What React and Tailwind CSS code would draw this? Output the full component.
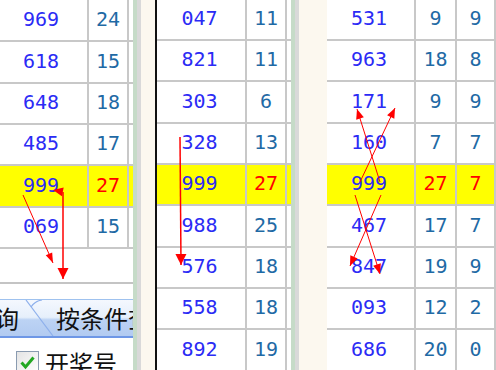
const left = [
  ['969', '24'], ['618', '15'], ['648', '18'], ['485', '17'], ['999', '27'], ['069', '15'],
];
const mid = [
  ['047', '11'], ['821', '11'], ['303', '6'], ['328', '13'], ['999', '27'],
  ['988', '25'], ['576', '18'], ['558', '18'], ['892', '19'],
];
const right = [
  ['531', '9', '9'], ['963', '18', '8'], ['171', '9', '9'], ['160', '7', '7'], ['999', '27', '7'],
  ['467', '17', '7'], ['847', '19', '9'], ['093', '12', '2'], ['686', '20', '0'],
];

const leftH = [42, 42, 41, 41, 42, 41];
const sideH = [41, 41, 42, 41, 41, 42, 41, 41, 42];

function Table({ rows, heights, widths, sliver }) {
  return (
    <div className="flex flex-col">
      {rows.map((r, i) => {
        const hi = i === 4;
        return (
          <div
            key={i}
            className={`flex shrink-0 border-b-2 border-[#c8c8c8] ${heights[i] === 42 ? 'h-[42px]' : 'h-[41px]'} ${hi ? 'bg-[#ffff00]' : 'bg-white'}`}
          >
            {r.map((v, j) => (
              <div
                key={j}
                className={`${widths[j]} shrink-0 flex items-center justify-center pb-[3px] border-r-2 border-[#c8c8c8] ${j === 0 ? 'pr-[3px] text-[#2b2bf5]' : hi ? 'text-[#ff0000]' : 'text-[#1f6aa5]'}`}
              >
                {v}
              </div>
            ))}
            {sliver && <div className="w-[4px] shrink-0" />}
          </div>
        );
      })}
    </div>
  );
}

function head(x1, y1, x2, y2, len = 10, w = 4) {
  const dx = x2 - x1;
  const dy = y2 - y1;
  const L = Math.hypot(dx, dy);
  const ux = dx / L;
  const uy = dy / L;
  const bx = x2 - ux * len;
  const by = y2 - uy * len;
  return `${x2},${y2} ${bx - uy * w},${by + ux * w} ${bx + uy * w},${by - ux * w}`;
}

const arrows = [
  { a: [23, 195, 53, 263], sw: 1, len: 10, w: 3.5 },
  { a: [63, 192, 63, 279], sw: 1.5, len: 11, w: 5.5 },
  { a: [180, 137, 181, 265], sw: 1.5, len: 11, w: 5.5 },
  { a: [380, 182, 357, 109], sw: 1, len: 10, w: 4 },
  { a: [360, 182, 395, 108], sw: 1, len: 10, w: 4 },
  { a: [355, 195, 380, 274], sw: 1, len: 10, w: 4 },
  { a: [381, 195, 350, 266], sw: 1, len: 10, w: 4 },
];

function Separator({ beige, black }) {
  return (
    <div className="flex shrink-0 h-full">
      <div className="w-[4px] bg-[#c6dbc8]" />
      <div className="w-[4px] bg-[#d9d9d9]" />
      <div className={`${beige} bg-[#fcf8ef]`} />
      {black && <div className="w-[2px] bg-[#111111]" />}
    </div>
  );
}

export default function App() {
  return (
    <div className="relative flex w-[496px] h-[370px] overflow-hidden bg-white font-['DejaVu_Sans_Mono',monospace] text-[20px]">
      {/* left panel */}
      <div className="w-[133px] shrink-0 h-full overflow-hidden flex flex-col">
        <div className="-ml-[2px]">
          <Table rows={left} heights={leftH} widths={['w-[91px]', 'w-[40px]']} sliver />
        </div>
        <div className="h-[33px] shrink-0" />
        <div className="h-[2px] shrink-0 bg-[#c4c4c4]" />
        <div className="h-[15px] shrink-0" />
        <div className="relative h-[39px] shrink-0 border-t border-b-2 border-t-[#9fc2ef] border-b-[#6e97e6] bg-[linear-gradient(to_bottom,#f4f8fe_0%,#e6effb_48%,#bcd3f4_55%,#b2cbf1_100%)] flex items-center whitespace-nowrap font-['Noto_Sans_CJK_SC',sans-serif] text-[24px] leading-[24px] text-[#111]">
          <span className="-ml-[29px]">查询</span>
          <span className="ml-[37px]">按条件查询</span>
          <svg className="absolute left-0 top-0" width="133" height="36">
            <path d="M26 0 L53 36" stroke="#8eb0ec" strokeWidth="1.2" fill="none" />
            <path d="M31 7 Q35 1 42 0" stroke="#8eb0ec" strokeWidth="1.2" fill="none" />
          </svg>
        </div>
        <div className="flex items-start pt-[13px] pl-[16px]">
          <div className="w-[23px] h-[23px] shrink-0 border border-[#8a9bb0] bg-[linear-gradient(135deg,#e4e4e4,#ffffff)] flex items-center justify-center">
            <svg width="19" height="19" viewBox="0 0 19 19">
              <path d="M3.5 9.5 L7.5 14 L15.5 4.5" stroke="#23a823" strokeWidth="3" fill="none" />
            </svg>
          </div>
          <span className="ml-[6px] font-['Noto_Sans_CJK_SC',sans-serif] text-[24px] leading-[24px] text-[#111]">开奖号</span>
        </div>
      </div>

      <Separator beige="w-[14px]" black />

      {/* middle panel */}
      <div className="w-[134px] shrink-0 h-full overflow-hidden">
        <Table rows={mid} heights={sideH} widths={['w-[90px]', 'w-[40px]']} sliver />
      </div>

      <Separator beige="w-[28px]" />

      {/* right panel */}
      <div className="w-[169px] shrink-0 h-full overflow-hidden">
        <Table rows={right} heights={sideH} widths={['w-[89px]', 'w-[41px]', 'w-[39px]']} />
      </div>

      {/* red arrows drawn over the grids */}
      <svg className="absolute inset-0 pointer-events-none" width="496" height="370">
        {arrows.map(({ a, sw, len, w }, i) => (
          <g key={i}>
            <line x1={a[0]} y1={a[1]} x2={a[2]} y2={a[3]} stroke="#ff0000" strokeWidth={sw} />
            <polygon points={head(a[0], a[1], a[2], a[3], len, w)} fill="#ff0000" />
          </g>
        ))}
        <polygon points={head(63, 192, 53, 190, 10, 4.5)} fill="#ff0000" />
      </svg>
    </div>
  );
}
